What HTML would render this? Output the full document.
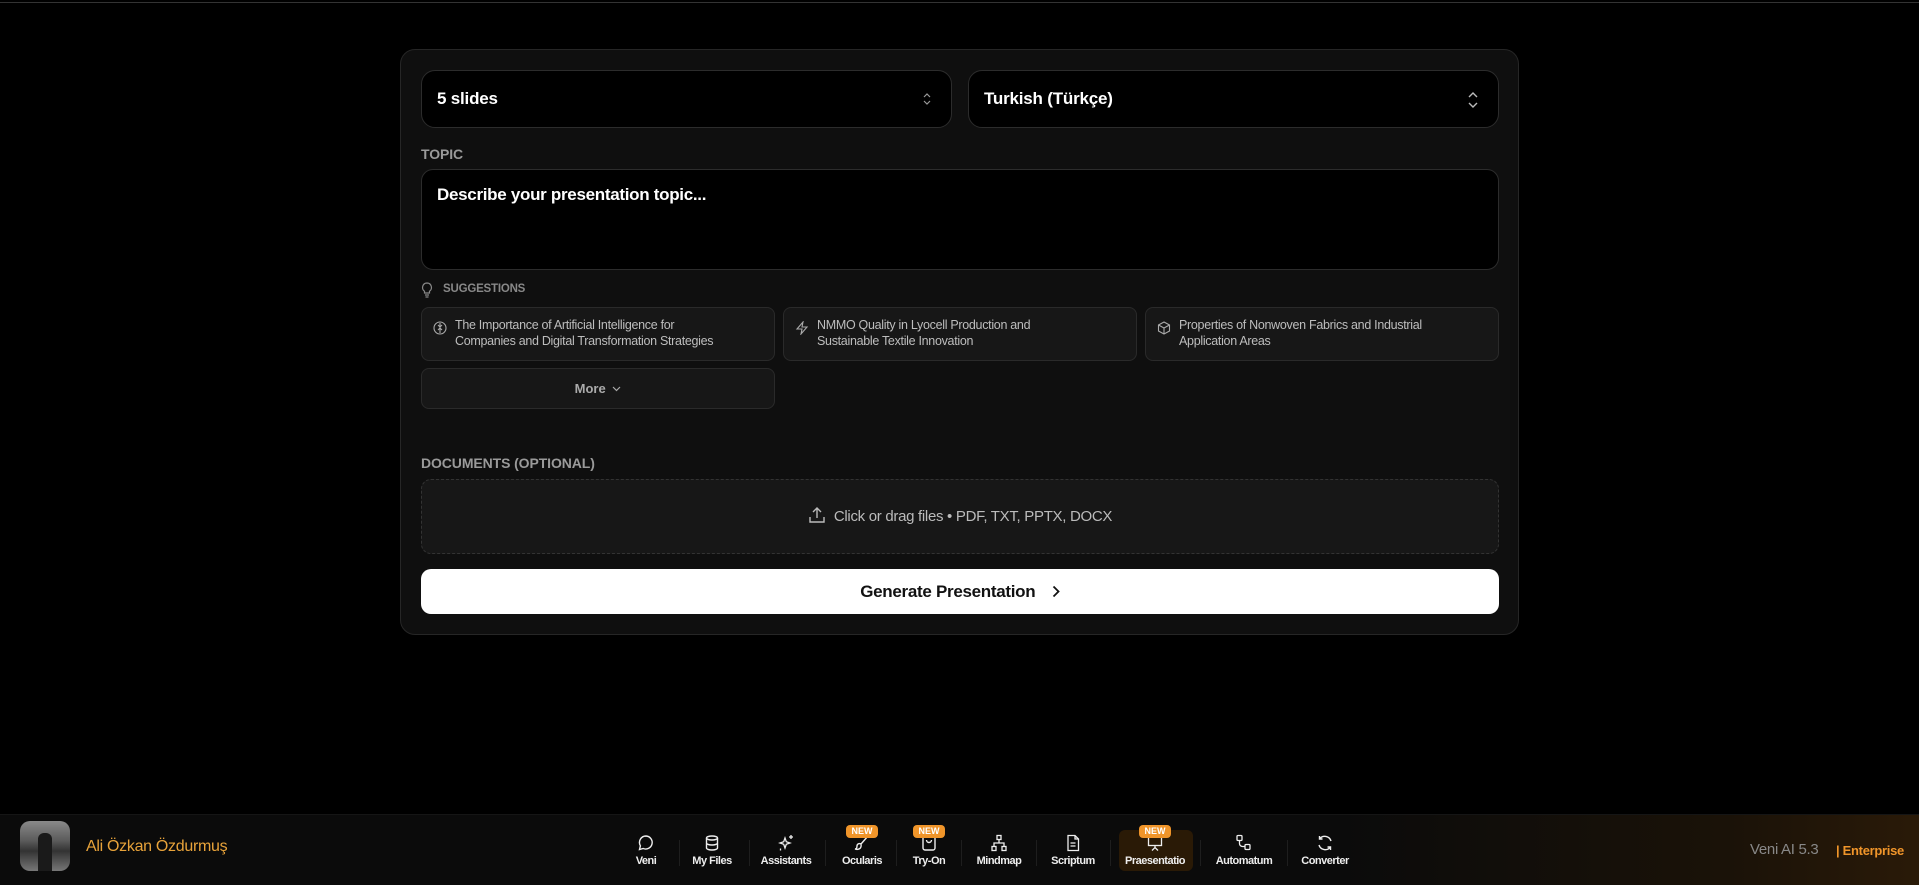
<!DOCTYPE html>
<html><head><meta charset="utf-8"><style>
*{box-sizing:border-box;margin:0;padding:0}
body{width:1919px;height:885px;background:#000;font-family:"Liberation Sans",sans-serif;color:#fff;position:relative;overflow:hidden}
.abs{position:absolute}
.topline{left:0;top:2px;width:1919px;height:1px;background:#333}
.card{left:400px;top:49px;width:1119px;height:586px;background:#0f0f0f;border:1px solid #262626;border-radius:15px}
.sel{top:70px;height:58px;background:#000;border:1px solid #2c2c2c;border-radius:14px;font-size:17px;font-weight:bold;padding-left:15px;line-height:56px;letter-spacing:-.2px}
.sel svg{position:absolute;right:20px;top:21px}
.lbl{font-size:14px;font-weight:bold;color:#9a9a9a;letter-spacing:-.1px}
.ta{left:421px;top:169px;width:1078px;height:101px;background:#000;border:1px solid #2c2c2c;border-radius:12px;padding:15px 15px;font-size:17px;font-weight:bold;letter-spacing:-.3px}
.sug{top:307px;height:54px;background:#171717;border:1px solid #2a2a2a;border-radius:8px;font-size:12.5px;color:#bdbdbd;padding:9px 10px 0 33px;line-height:16px;letter-spacing:-.3px}
.sug svg{position:absolute;left:11px;top:13px}
.more{left:421px;top:368px;width:354px;height:41px;background:#171717;border:1px solid #2a2a2a;border-radius:8px;font-size:13px;font-weight:bold;color:#aaa;text-align:center;line-height:39px}
.drop{left:421px;top:479px;width:1078px;height:75px;background:#171717;border:1px dashed #333;border-radius:10px;font-size:15px;color:#bbb;text-align:center;line-height:73px;letter-spacing:-.3px}
.gen{left:421px;top:569px;width:1078px;height:45px;background:#fff;border-radius:10px;color:#111;font-size:17px;font-weight:bold;text-align:center;line-height:45px;letter-spacing:-.3px}
.foot{left:0;top:814px;width:1919px;height:71px;background:linear-gradient(90deg,#0b0b0b 0%,#0b0b0b 70%,#1a1208 90%,#2a1a08 100%);border-top:1px solid #151515}
.nav{top:834px;width:76px;margin-left:-38px;text-align:center;font-size:11px;font-weight:bold;color:#eee;letter-spacing:-.5px}
.nav svg{display:block;margin:0 auto 3px}
.new{top:825px;width:32px;margin-left:-16px;height:13px;background:#f0952a;border-radius:4px;font-size:9px;font-weight:bold;color:#fff;text-align:center;line-height:13px}
.sep{top:840px;width:1px;height:26px;background:#1e1e1e}
</style></head><body>
<div class="abs topline"></div>
<div class="abs card"></div>
<div class="abs sel" style="left:421px;width:531px">5 slides<svg width="8" height="14" viewBox="0 0 8 14" fill="none" stroke="#999" stroke-width="1.2"><path d="M1 5l3-3 3 3M1 9l3 3 3-3"/></svg></div>
<div class="abs sel" style="left:968px;width:531px">Turkish (Türkçe)<svg width="10" height="16" viewBox="0 0 10 16" fill="none" stroke="#bbb" stroke-width="1.4"><path d="M1 5l4-4 4 4M1 11l4 4 4-4"/></svg></div>
<div class="abs lbl" style="left:421px;top:146px">TOPIC</div>
<div class="abs ta">Describe your presentation topic...</div>
<svg class="abs" style="left:421px;top:282px" width="12" height="16" viewBox="0 0 12 16" fill="none" stroke="#888" stroke-width="1.2"><path d="M6 1a4.5 4.5 0 0 0-2.5 8.2V11h5V9.2A4.5 4.5 0 0 0 6 1zM4 13h4M4.5 15h3"/></svg>
<div class="abs" style="left:443px;top:283px;font-size:11.5px;font-weight:bold;color:#888;letter-spacing:-.2px">SUGGESTIONS</div>
<div class="abs sug" style="left:421px;width:354px"><svg width="14" height="14" viewBox="0 0 14 14" fill="none" stroke="#aaa" stroke-width="1.1"><circle cx="7" cy="7" r="6"/><path d="M7 2v10M5 4l2 2 2-2M5 9l2-2 2 2"/></svg>The Importance of Artificial Intelligence for<br>Companies and Digital Transformation Strategies</div>
<div class="abs sug" style="left:783px;width:354px"><svg width="14" height="14" viewBox="0 0 14 14" fill="none" stroke="#aaa" stroke-width="1.1"><path d="M8 1L2 8h5l-1 5 6-7H7z"/></svg>NMMO Quality in Lyocell Production and<br>Sustainable Textile Innovation</div>
<div class="abs sug" style="left:1145px;width:354px"><svg width="14" height="14" viewBox="0 0 14 14" fill="none" stroke="#aaa" stroke-width="1.1"><path d="M7 1l5.5 3v6L7 13 1.5 10V4zM1.5 4L7 7l5.5-3M7 7v6"/></svg>Properties of Nonwoven Fabrics and Industrial<br>Application Areas</div>
<div class="abs more">More <svg style="vertical-align:1px;margin-left:3px" width="9" height="6" viewBox="0 0 9 6" fill="none" stroke="#aaa" stroke-width="1.2"><path d="M1 1l3.5 3.5L8 1"/></svg></div>
<div class="abs lbl" style="left:421px;top:455px">DOCUMENTS (OPTIONAL)</div>
<div class="abs drop"><svg style="vertical-align:-3px;margin-right:8px" width="18" height="18" viewBox="0 0 18 18" fill="none" stroke="#bbb" stroke-width="1.4"><path d="M9 12V2M5 6l4-4 4 4M2 11v5h14v-5"/></svg>Click or drag files • PDF, TXT, PPTX, DOCX</div>
<div class="abs gen">Generate Presentation <svg style="vertical-align:-1px;margin-left:12px" width="8" height="13" viewBox="0 0 8 13" fill="none" stroke="#111" stroke-width="1.8"><path d="M1.5 1.5l5 5-5 5"/></svg></div>

<div class="abs foot"></div>
<div class="abs" style="left:20px;top:821px;width:50px;height:50px;border-radius:10px;background:linear-gradient(180deg,#8a8a8a,#5a5a5a 40%,#333 60%,#777)"><div style="position:absolute;left:18px;top:12px;width:14px;height:38px;background:#1a1a1a;border-radius:6px 6px 0 0"></div></div>
<div class="abs" style="left:86px;top:838px;font-size:16px;color:#e8a33a;letter-spacing:-.3px">Ali Özkan Özdurmuş</div>
<div class="abs" style="left:1119px;top:830px;width:74px;height:41px;background:#2a1a06;border-radius:6px"></div>

<div class="abs nav" style="left:646px"><svg width="18" height="18" viewBox="0 0 18 18" fill="none" stroke="#eee" stroke-width="1.4"><path d="M9 2a6.5 6.5 0 0 0-5.6 9.8L2.5 15.5l3.7-1A6.5 6.5 0 1 0 9 2z"/></svg>Veni</div>
<div class="abs nav" style="left:712px"><svg width="18" height="18" viewBox="0 0 18 18" fill="none" stroke="#eee" stroke-width="1.4"><ellipse cx="9" cy="4" rx="5.5" ry="2"/><path d="M3.5 4v10c0 1.1 2.5 2 5.5 2s5.5-.9 5.5-2V4M3.5 9c0 1.1 2.5 2 5.5 2s5.5-.9 5.5-2"/></svg>My Files</div>
<div class="abs nav" style="left:786px"><svg width="18" height="18" viewBox="0 0 18 18" fill="none" stroke="#eee" stroke-width="1.3"><path d="M8 4l1.3 3.7L13 9l-3.7 1.3L8 14l-1.3-3.7L3 9l3.7-1.3zM14 1v4M12 3h4M3.5 14.5v2"/></svg>Assistants</div>
<div class="abs nav" style="left:862px"><svg width="18" height="18" viewBox="0 0 18 18" fill="none" stroke="#eee" stroke-width="1.4"><path d="M15 2L8 10M8 10c-2-1-4 0-4 2s-1 3-2 3c3 1 7 0 6-5z"/></svg>Ocularis</div>
<div class="abs nav" style="left:929px"><svg width="18" height="18" viewBox="0 0 18 18" fill="none" stroke="#eee" stroke-width="1.4"><rect x="3" y="2" width="12" height="14" rx="2"/><path d="M6.5 6a2.5 2.5 0 0 0 5 0"/></svg>Try-On</div>
<div class="abs nav" style="left:999px"><svg width="18" height="18" viewBox="0 0 18 18" fill="none" stroke="#eee" stroke-width="1.3"><rect x="7" y="1.5" width="4" height="4"/><rect x="2" y="12.5" width="4" height="4"/><rect x="12" y="12.5" width="4" height="4"/><path d="M9 5.5V9M4 12.5V9h10v3.5"/></svg>Mindmap</div>
<div class="abs nav" style="left:1073px"><svg width="18" height="18" viewBox="0 0 18 18" fill="none" stroke="#eee" stroke-width="1.3"><path d="M4 1.5h7l3.5 3.5v11.5H4zM11 1.5V5h3.5M6.5 9h5M6.5 12h5"/></svg>Scriptum</div>
<div class="abs nav" style="left:1155px"><svg width="18" height="18" viewBox="0 0 18 18" fill="none" stroke="#eee" stroke-width="1.3"><rect x="2.5" y="2.5" width="13" height="9"/><path d="M9 11.5v2M6 16.5l3-3 3 3"/></svg>Praesentatio</div>
<div class="abs nav" style="left:1244px"><svg width="18" height="18" viewBox="0 0 18 18" fill="none" stroke="#eee" stroke-width="1.3"><rect x="2" y="1.5" width="5" height="5" rx="1"/><rect x="10" y="10.5" width="5" height="5" rx="1"/><path d="M4.5 6.5v3a3 3 0 0 0 3 3H10"/></svg>Automatum</div>
<div class="abs nav" style="left:1325px"><svg width="18" height="18" viewBox="0 0 18 18" fill="none" stroke="#eee" stroke-width="1.4"><path d="M15 7A6.5 6.5 0 0 0 3.5 5M3 11a6.5 6.5 0 0 0 11.5 2M3.5 2v3h3M14.5 16v-3h-3"/></svg>Converter</div>
<div class="abs sep" style="left:679px"></div><div class="abs sep" style="left:749px"></div><div class="abs sep" style="left:825px"></div><div class="abs sep" style="left:896px"></div><div class="abs sep" style="left:961px"></div><div class="abs sep" style="left:1036px"></div><div class="abs sep" style="left:1110px"></div><div class="abs sep" style="left:1200px"></div><div class="abs sep" style="left:1287px"></div>
<div class="abs new" style="left:862px">NEW</div>
<div class="abs new" style="left:929px">NEW</div>
<div class="abs new" style="left:1155px">NEW</div>
<div class="abs" style="left:1750px;top:841px;font-size:15px;color:#888;letter-spacing:-.3px">Veni AI 5.3</div>
<div class="abs" style="left:1836px;top:843px;font-size:13px;color:#f0952a;font-weight:bold;letter-spacing:-.3px">| Enterprise</div>
</body></html>
